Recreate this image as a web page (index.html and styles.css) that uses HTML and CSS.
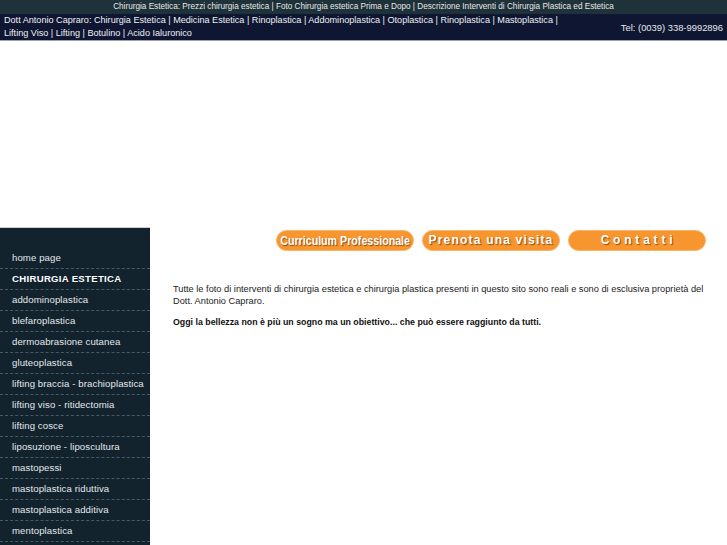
FILE: index.html
```html
<!DOCTYPE html>
<html lang="it">
<head>
<meta charset="utf-8">
<title>Chirurgia Estetica - Dott Antonio Capraro</title>
<link rel="stylesheet" href="styles.css">
</head>
<body>
<div class="topstrip">Chirurgia Estetica: Prezzi chirurgia estetica | Foto Chirurgia estetica Prima e Dopo | Descrizione Interventi di Chirurgia Plastica ed Estetica</div>
<div class="navbar">
  <div class="navlinks">Dott Antonio Capraro: Chirurgia Estetica | Medicina Estetica | Rinoplastica | Addominoplastica | Otoplastica | Rinoplastica | Mastoplastica | Lifting Viso | Lifting | Botulino | Acido Ialuronico</div>
  <div class="tel">Tel: (0039) 338-9992896</div>
</div>
<div class="banner"></div>
<div class="main">
  <ul class="sidebar">
    <li>home page</li>
    <li class="head">CHIRURGIA ESTETICA</li>
    <li>addominoplastica</li>
    <li>blefaroplastica</li>
    <li>dermoabrasione cutanea</li>
    <li>gluteoplastica</li>
    <li>lifting braccia - brachioplastica</li>
    <li>lifting viso - ritidectomia</li>
    <li>lifting cosce</li>
    <li>liposuzione - liposcultura</li>
    <li>mastopessi</li>
    <li>mastoplastica riduttiva</li>
    <li>mastoplastica additiva</li>
    <li>mentoplastica</li>
  </ul>
  <div class="content">
    <div class="buttons">
      <span class="btn btn-cv"><span class="narrow">Curriculum Professionale</span></span>
      <span class="btn btn-visit">Prenota una visita</span>
      <span class="btn btn-contact">Contatti</span>
    </div>
    <p class="intro">Tutte le foto di interventi di chirurgia estetica e chirurgia plastica presenti in questo sito sono reali e sono di esclusiva proprietà del Dott. Antonio Capraro.</p>
    <p class="motto">Oggi la bellezza non è più un sogno ma un obiettivo... che può essere raggiunto da tutti.</p>
  </div>
</div>
</body>
</html>
```
FILE: styles.css
```css
* { box-sizing: border-box; }
html, body { margin: 0; padding: 0; background: #ffffff; }
body { font-family: "Liberation Sans", Arial, sans-serif; color: #222; overflow: hidden; height: 545px; }

.topstrip {
  height: 14px;
  background: #1f3139;
  color: #e6e8ea;
  font-size: 8.2px;
  line-height: 14px;
  text-align: center;
  white-space: nowrap;
}

.navbar {
  height: 27px;
  background: #0e1631;
  border-bottom: 1px solid #9aa3b5;
  display: flex;
  align-items: center;
  justify-content: space-between;
  padding: 0 4px;
}
.navlinks {
  width: 570px;
  color: #f0f1f4;
  font-size: 9.1px;
  line-height: 13px;
}
.tel {
  color: #e8eaee;
  font-size: 9.4px;
  white-space: nowrap;
  padding-top: 1px;
}

.banner { height: 186px; }

.main { display: flex; align-items: flex-start; }

.sidebar {
  list-style: none;
  margin: 0;
  padding: 20px 0 0 0;
  width: 150px;
  flex: none;
  height: 318px;
  background: #12232e;
  border-top: 1px solid #c9ced2;
}
.sidebar li {
  height: 21px;
  line-height: 20px;
  padding-left: 12px;
  color: #e4e8ea;
  font-size: 9.6px;
  letter-spacing: 0.1px;
  border-bottom: 1px dashed #4a5a62;
  white-space: nowrap;
}
.sidebar li.head { font-weight: bold; color: #ffffff; letter-spacing: 0.3px; }

.content { flex: 1; padding: 2px 21px 0 23px; }

.buttons {
  display: flex;
  justify-content: flex-end;
  gap: 8px;
  margin-top: 1px;
}
.btn {
  width: 138px;
  height: 21px;
  border-radius: 11px;
  background: #f7962e;
  border: 1px solid #f9b46a;
  color: #ffffff;
  font-weight: bold;
  font-size: 12px;
  line-height: 19px;
  text-align: center;
  text-shadow: 1px 1px 1px #8a4a10;
  white-space: nowrap;
}
.btn-cv { font-size: 13px; display: flex; justify-content: center; }
.narrow { display: block; flex: none; transform: scaleX(0.82); }
.btn-visit { letter-spacing: 1.2px; }
.btn-contact { letter-spacing: 3.8px; text-indent: 3px; }

.intro {
  margin: 32px 0 0 0;
  font-size: 9.25px;
  line-height: 12px;
  color: #222;
}
.motto {
  margin: 9px 0 0 0;
  font-size: 8.8px;
  line-height: 12px;
  font-weight: bold;
  color: #111;
}
```
